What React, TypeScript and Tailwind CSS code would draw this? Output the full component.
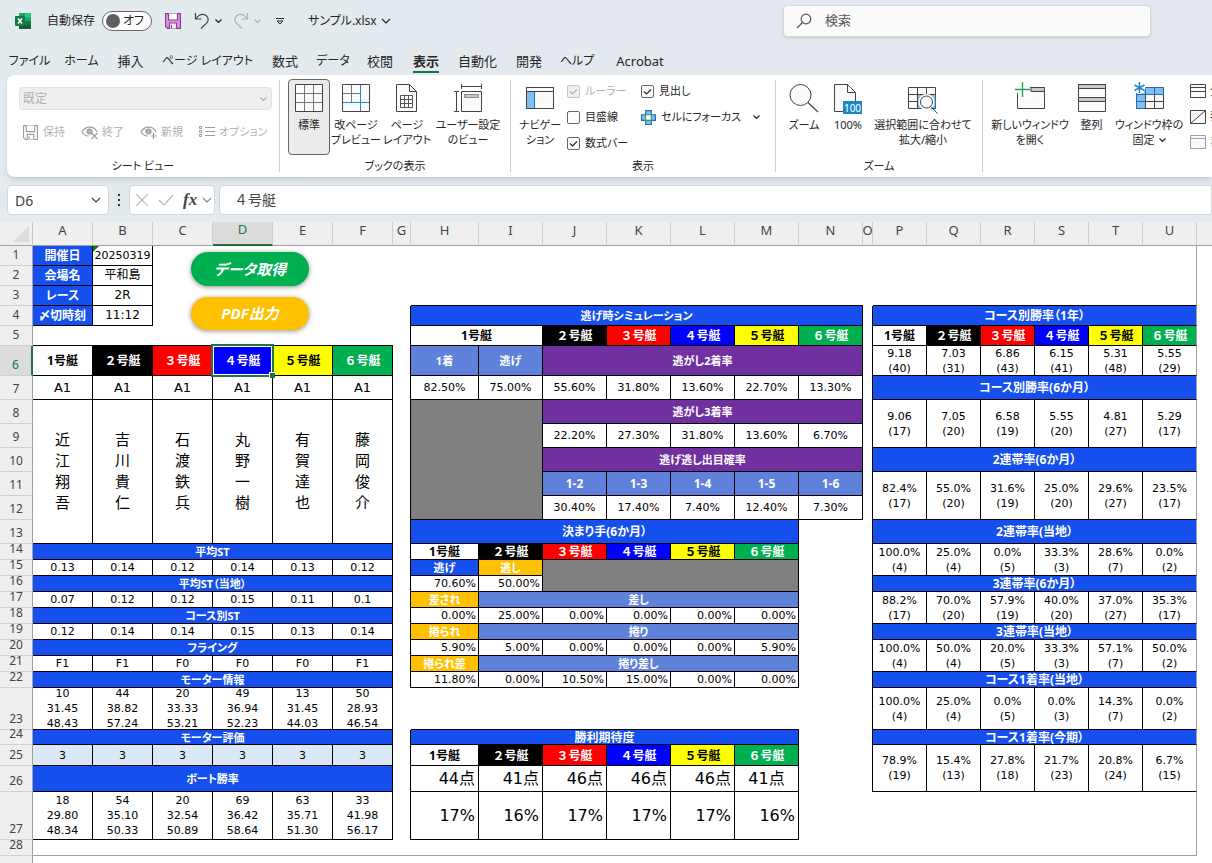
import React from 'react';
import clsx from 'clsx';

/* ---------- icons ---------- */

const Chevron: React.FC<{ className?: string }> = ({ className }) => (
  <svg viewBox="0 0 10 6" fill="none" stroke="currentColor" strokeWidth="1.2" className={clsx('shrink-0', className)}>
    <path d="M1 1l4 4 4-4" />
  </svg>
);

const SmallChevron: React.FC<{ className?: string }> = ({ className }) => (
  <svg viewBox="0 0 7 4" fill="none" stroke="currentColor" strokeWidth="1.2" className={clsx('shrink-0 w-[7px] h-1', className)}>
    <path d="M.5.5l3 3 3-3" />
  </svg>
);

const ExcelLogo = () => (
  <svg viewBox="0 0 16 16" className="w-4 h-4">
    <rect x="4" y="0" width="6" height="4" fill="#21a366" />
    <rect x="10" y="0" width="6" height="4" fill="#33c481" />
    <rect x="4" y="4" width="6" height="4" fill="#107c41" />
    <rect x="10" y="4" width="6" height="4" fill="#21a366" />
    <rect x="4" y="8" width="12" height="8" fill="#185c37" />
    <rect x="10" y="8" width="6" height="4" fill="#107c41" />
    <rect x="0" y="3" width="10" height="10" rx="1" fill="#107c41" />
    <path d="M3 5.500l4 5M7 5.500l-4 5" stroke="#fff" strokeWidth="1.500" />
  </svg>
);

const SaveIcon: React.FC<{ stroke: string; fill: string; className: string }> = ({ stroke, fill, className }) => (
  <svg viewBox="0 0 16 16" className={className} stroke={stroke} strokeWidth="1.200">
    <path d="M.6.6h14.800v14.800H2.600l-2-2z" fill={fill} />
    <path d="M3.500.6v6.400h9V.6M4.500 15.400v-5.400h7v5.400M6.500 12v3" fill="#fff" />
  </svg>
);

const UndoIcon: React.FC<{ className?: string }> = ({ className }) => (
  <svg viewBox="0 0 16 18" fill="none" stroke="currentColor" strokeWidth="1.200" className={className}>
    <path d="M1.500 1v6h6M1.800 6.800C5 2.500 9 1.500 12 3.500c3 2.300 2.600 5.500.5 7.600L7 16.500" />
  </svg>
);

const SearchIcon = () => (
  <svg viewBox="0 0 16 16" fill="none" stroke="#555" strokeWidth="1.200" className="w-4 h-4">
    <circle cx="10" cy="6" r="4.800" />
    <path d="M6.500 9.500L1 15" />
  </svg>
);

const EyeIcon: React.FC<{ mark: string }> = ({ mark }) => (
  <svg viewBox="0 0 18 16" fill="none" stroke="#9c9c9c" strokeWidth="1.200" className="w-[18px] h-4">
    <path d="M1 8c2-3.500 4.500-4.800 7.500-4.800S14.500 4.500 16 8M1 8c1.500 2.500 3.500 3.800 6.500 4" />
    <circle cx="8.500" cy="7.500" r="2.500" fill="#b5b5b5" />
    <path d={mark} />
  </svg>
);

const ListIcon = () => (
  <svg viewBox="0 0 16 14" fill="none" stroke="#9c9c9c" className="w-4 h-[14px]">
    <path d="M.5 1.500h2v2h-2zM.5 5.500h2v2h-2zM.5 9.500h2v2h-2zM6 2.500h10M6 6.500h10M6 10.500h10" />
  </svg>
);

const GridIcon = () => (
  <svg viewBox="0 0 28 28" fill="#fafafa" stroke="#444" className="w-7 h-7">
    <path d="M.5.5h27v27H.5z" />
    <path d="M9.500 1v26M18.500 1v26M1 9.500h26M1 18.500h26" stroke="#777" />
  </svg>
);

const PageBreakIcon = () => (
  <svg viewBox="0 0 28 28" fill="#fafafa" stroke="#444" className="w-7 h-7">
    <path d="M.5.5h27v27H.5z" />
    <path d="M9.500 1v17M1 9.500h17" stroke="#777" />
    <path d="M18.500 1v26M1 18.500h26" stroke="#1e8bcd" />
  </svg>
);

const PageLayoutIcon = () => (
  <svg viewBox="0 0 28 28" fill="#fafafa" stroke="#444" className="w-7 h-7">
    <path d="M3.500.5h13l7 7v20h-20z" />
    <path d="M16.500.5v7h7z" fill="#fff" />
    <path d="M7.500 11.500h12v12h-12zM7.500 15.500h12M7.500 19.500h12M11.500 11.500v12M15.500 11.500v12" stroke="#555" />
  </svg>
);

const CustomViewIcon = () => (
  <svg viewBox="0 0 28 28" fill="#fafafa" stroke="#444" className="w-7 h-7">
    <path d="M7.500 7.500h20v20h-20z" />
    <path d="M10.500 10.500h14v3h-14z" fill="#c8c8c8" stroke="#888" />
    <path d="M7.500 0v5M27.500 0v5M7.500 2.500h20M0 7.500h5M0 27.500h5M2.500 7.500v20" />
  </svg>
);

const NavigationIcon = () => (
  <svg viewBox="0 0 28 28" stroke="#444" className="w-7 h-7">
    <path d="M.5 3.500h27v21H.5z" fill="#fafafa" />
    <path d="M.5 7.500h8v17h-8z" fill="#83beec" stroke="#1e6fb8" />
    <path d="M.5 7.500h27M.5 3.500h27v21H.5z" fill="none" />
  </svg>
);

const FocusCellIcon = () => (
  <svg viewBox="0 0 16 16" className="w-[15px] h-[15px] shrink-0">
    <path d="M5 .6h6V5h4.400v6H11v4.400H5V11H.6V5H5z" fill="#83beec" stroke="#1e6fb8" strokeWidth="1.200" />
    <path d="M5 5h6v6H5z" fill="#fff" stroke="#2e9e58" strokeWidth="1.200" />
  </svg>
);

const ZoomIcon = () => (
  <svg viewBox="0 0 30 30" fill="#fafafa" stroke="#444" className="w-[30px] h-[30px]">
    <circle cx="11.500" cy="12" r="10.500" />
    <path d="M19 19.500l10 9.500" strokeWidth="1.200" />
  </svg>
);

const HundredIcon = () => (
  <svg viewBox="0 0 28 28" stroke="#444" className="w-7 h-7 overflow-visible">
    <path d="M.5.5h13l8 8v19H.5z" fill="#fafafa" />
    <path d="M13.500.5v8h8" fill="none" />
    <path d="M9 17h19v13H9z" fill="#1e86c8" stroke="none" />
    <text x="18.500" y="27.500" textAnchor="middle" fontSize="10" fill="#fff" stroke="none">100</text>
  </svg>
);

const ZoomSelectionIcon = () => (
  <svg viewBox="0 0 30 28" stroke="#444" className="w-[30px] h-7 overflow-visible">
    <path d="M.5 3.500h27v21H.5z" fill="#fafafa" />
    <path d="M9.500 10.500h18v14h-18z" fill="#83beec" stroke="#1e6fb8" />
    <path d="M.5 10.500h27M.5 17.500h9M9.500 3.500v21M18.500 3.500v7" fill="none" />
    <circle cx="18.500" cy="18" r="8" fill="#fff" stroke="none" />
    <circle cx="18.500" cy="18" r="6" fill="#fafafa" />
    <path d="M23 22.500l6.500 7" />
  </svg>
);

const NewWindowIcon = () => (
  <svg viewBox="0 0 30 28" stroke="#444" className="w-[30px] h-7 overflow-visible">
    <path d="M2.500 3.500h27v21h-27z" fill="#fafafa" />
    <path d="M16 3.500h13.500v4H16z" fill="#c8c8c8" />
    <path d="M0 0h15v14H3.500V9H0z" fill="#fff" stroke="none" />
    <path d="M7.500-2v15M0 5.500h15" stroke="#2e9e58" strokeWidth="1.400" />
  </svg>
);

const ArrangeIcon = () => (
  <svg viewBox="0 0 28 28" fill="#fafafa" stroke="#444" className="w-7 h-7">
    <path d="M.5.5h27v27H.5z" />
    <path d="M.5.5h27v4H.5zM.5 13.500h27v4H.5z" fill="#c8c8c8" />
  </svg>
);

const FreezeIcon = () => (
  <svg viewBox="0 0 30 28" stroke="#444" className="w-[30px] h-7 overflow-visible">
    <path d="M2.500 3.500h27v21h-27z" fill="#fafafa" />
    <path d="M2.500 3.500h27v7h-18v14h-9z" fill="#83beec" stroke="#1e6fb8" />
    <path d="M11.500 3.500v7M20.500 3.500v7M2.500 17.500h9M2.500 10.500h9" fill="none" stroke="#1e6fb8" />
    <path d="M20.500 10.500v14M11.500 17.500h18M11.500 10.500v14" fill="none" />
    <circle cx="5.500" cy="4" r="6" fill="#fff" stroke="none" />
    <path d="M5.500-2v11M.5 1l10 5.500M.5 6.500L10.500 1" stroke="#1e86c8" strokeWidth="1.500" />
  </svg>
);

const PaneIcon: React.FC<{ line: string; dim?: boolean }> = ({ line, dim }) => (
  <svg viewBox="0 0 16 14" fill="#fafafa" stroke={dim ? '#a0a0a0' : '#444'} className="w-4 h-[14px] shrink-0">
    <path d="M.5.5h15v13H.5z" />
    <path d={line} />
  </svg>
);

/* ---------- title bar, tabs, ribbon ---------- */

const TitleBar = () => (
  <header className="flex items-center h-[42px] pl-[15px] pr-[61px] justify-between text-[12px] text-[#262626]">
    <div className="flex items-center">
      <ExcelLogo />
      <span id="autosave" className="ml-4">自動保存</span>
      <button
        role="switch"
        aria-checked="false"
        aria-labelledby="autosave"
        className="flex items-center justify-between w-[50px] h-5 ml-[7px] pl-[3px] pr-[7px] rounded-full border border-[#666] bg-white"
      >
        <span className="w-[14px] h-[14px] rounded-full bg-[#606060]" />
        オフ
      </button>
      <button aria-label="上書き保存" className="ml-[13px]">
        <SaveIcon stroke="#8b3a98" fill="#d99ae3" className="w-4 h-4" />
      </button>
      <button aria-label="元に戻す" className="flex items-center gap-[5px] ml-[13px]">
        <UndoIcon className="w-4 h-[18px] text-[#444]" />
        <SmallChevron />
      </button>
      <button aria-label="やり直し" className="flex items-center gap-[5px] ml-[11px] text-[#b0b0b0]">
        <UndoIcon className="w-4 h-[18px] -scale-x-100" />
        <SmallChevron />
      </button>
      <button aria-label="ツールバーのカスタマイズ" className="ml-[15px]">
        <svg viewBox="0 0 8 8" fill="none" stroke="currentColor" className="w-2 h-2">
          <path d="M0 1.500h8M1 4l3 3 3-3z" />
        </svg>
      </button>
      <button className="flex items-center gap-1 ml-6">
        サンプル.xlsx
        <Chevron className="w-[10px] h-[6px]" />
      </button>
    </div>
    <label className="flex items-center gap-[13px] w-[368px] h-8 px-3 rounded bg-[#fafafa] border border-[#d5d9dc] shadow-sm">
      <SearchIcon />
      <input aria-label="検索" placeholder="検索" className="flex-1 outline-none text-[13px] placeholder:text-[#555]" />
    </label>
  </header>
);

const tabs = [
  { name: 'ファイル', style: 'w-[55px] text-[12px]' },
  { name: 'ホーム', style: 'w-[49px] text-[12px]' },
  { name: '挿入', style: 'w-[49px] text-[13px]' },
  { name: 'ページ レイアウト', style: 'w-[105px] text-[12px]' },
  { name: '数式', style: 'w-[50px] text-[13px]' },
  { name: 'データ', style: 'w-[46px] text-[12px]' },
  { name: '校閲', style: 'w-[48px] text-[13px]' },
  { name: '表示', style: 'w-[44px] text-[13px]' },
  { name: '自動化', style: 'w-[59px] text-[13px]' },
  { name: '開発', style: 'w-[44px] text-[13px]' },
  { name: 'ヘルプ', style: 'w-[52px] text-[12px]' },
  { name: 'Acrobat', style: 'w-[74px] text-[13px]' }
];

const Tabs = () => (
  <nav className="flex h-[33px] pl-[2px] pt-[9px] text-[#262626]">
    {tabs.map(tab => (
      <button key={tab.name} className={clsx('flex justify-center whitespace-nowrap', tab.style)}>
        <span
          className={clsx(
            'h-[22px] leading-5',
            tab.name === '表示' && 'font-bold border-b-2 border-[#107c41]'
          )}
        >
          {tab.name}
        </span>
      </button>
    ))}
  </nav>
);

type GroupProps = { label?: string; width?: string; inset?: string; children: React.ReactNode };

const Group: React.FC<GroupProps> = ({ label, width, inset, children }) => (
  <section className={clsx('flex flex-col shrink-0', width)}>
    <div className={clsx('flex h-20', inset)}>{children}</div>
    <div className="h-[22px] leading-[22px] text-center">{label}</div>
  </section>
);

const Separator = () => <div className="w-px my-[5px] shrink-0 bg-[#cfcfcf]" />;

type BigButtonProps = { icon: React.ReactNode; lines: string[]; width: string; active?: boolean; menu?: boolean };

const BigButton: React.FC<BigButtonProps> = ({ icon, lines, width, active, menu }) => (
  <button
    className={clsx(
      'flex flex-col items-center shrink-0 h-[76px] mt-1 pt-1 rounded border leading-[15px] whitespace-nowrap',
      width,
      active ? 'border-[#666] bg-[#ebebeb]' : 'border-transparent'
    )}
  >
    <span className="flex items-center justify-center h-7 mb-[5px]">{icon}</span>
    {lines.map((line, i) => (
      <span key={line} className="flex items-center gap-1">
        {line}
        {menu && i === lines.length - 1 && <SmallChevron />}
      </span>
    ))}
  </button>
);

const Check: React.FC<{ label: string; checked?: boolean; disabled?: boolean }> = ({ label, checked, disabled }) => (
  <label className={clsx('flex items-center gap-[5px] h-[26px] whitespace-nowrap', disabled && 'text-[#b0b0b0]')}>
    <span className="relative flex">
      <input
        type="checkbox"
        defaultChecked={checked}
        disabled={disabled}
        className="peer appearance-none w-[13px] h-[13px] rounded-xs border border-[#666] bg-white disabled:border-[#c4c4c4] disabled:bg-[#f0f0f0]"
      />
      <svg viewBox="0 0 13 13" fill="none" stroke="currentColor" strokeWidth="1.200" className="absolute inset-0 hidden peer-checked:block pointer-events-none">
        <path d="M3 6.500l2.500 2.500L10 4.500" />
      </svg>
    </span>
    {label}
  </label>
);

const Ribbon = () => (
  <div className="flex ml-[7px] rounded-l-lg bg-white shadow-md overflow-hidden text-[11px] text-[#262626]">
    <Group label="シート ビュー" width="w-[272px]">
      <div className="flex flex-col w-full pl-3 pr-[7px] pt-3 gap-[10px] text-[#b0b0b0]">
        <div className="relative flex items-center">
          <select disabled aria-label="シート ビュー" className="appearance-none w-full h-[23px] px-[3px] rounded border border-[#e0e0e0] bg-[#efefef] text-[12px] opacity-100">
            <option>既定</option>
          </select>
          <SmallChevron className="absolute right-[5px]" />
        </div>
        <div className="flex items-center h-6 pl-1 gap-4 whitespace-nowrap">
          <button disabled className="flex items-center gap-[5px]">
            <SaveIcon stroke="#9c9c9c" fill="#fff" className="w-[15px] h-[15px]" />保持
          </button>
          <button disabled className="flex items-center gap-[3px]">
            <EyeIcon mark="M10.500 9l6 6M16.500 9l-6 6" />終了
          </button>
          <button disabled className="flex items-center gap-[3px]">
            <EyeIcon mark="M13.500 9v6M10.500 12h6" />新規
          </button>
          <button disabled className="flex items-center gap-1">
            <ListIcon />オプション
          </button>
        </div>
      </div>
    </Group>
    <Separator />
    <Group label="ブックの表示" width="w-[230px]" inset="pl-2">
      <BigButton icon={<GridIcon />} lines={['標準']} width="w-[42px]" active />
      <BigButton icon={<PageBreakIcon />} lines={['改ページ', 'プレビュー']} width="w-[52px]" />
      <BigButton icon={<PageLayoutIcon />} lines={['ページ', 'レイアウト']} width="w-[50px]" />
      <BigButton icon={<CustomViewIcon />} lines={['ユーザー設定', 'のビュー']} width="w-[72px]" />
    </Group>
    <Separator />
    <Group label="表示" width="w-[264px]" inset="pl-[5px]">
      <BigButton icon={<NavigationIcon />} lines={['ナビゲー', 'ション']} width="w-12" />
      <div className="w-[74px] ml-[3px] pt-[3px]">
        <Check label="ルーラー" checked disabled />
        <Check label="目盛線" />
        <Check label="数式バー" checked />
      </div>
      <div className="pt-[3px]">
        <Check label="見出し" checked />
        <button className="flex items-center h-[26px] whitespace-nowrap">
          <FocusCellIcon />
          <span className="ml-[5px] mr-3">セルにフォーカス</span>
          <SmallChevron />
        </button>
      </div>
    </Group>
    <Separator />
    <Group label="ズーム" width="w-[206px]" inset="pl-2">
      <BigButton icon={<ZoomIcon />} lines={['ズーム']} width="w-10" />
      <BigButton icon={<HundredIcon />} lines={['100%']} width="w-12" />
      <BigButton icon={<ZoomSelectionIcon />} lines={['選択範囲に合わせて', '拡大/縮小']} width="w-[102px]" />
    </Group>
    <Separator />
    <Group inset="pl-[2px]">
      <BigButton icon={<NewWindowIcon />} lines={['新しいウィンドウ', 'を開く']} width="w-[90px]" />
      <BigButton icon={<ArrangeIcon />} lines={['整列']} width="w-[33px]" />
      <BigButton icon={<FreezeIcon />} lines={['ウィンドウ枠の', '固定']} width="w-[82px]" menu />
      <div className="flex flex-col pt-[3px] whitespace-nowrap">
        <button className="flex items-center gap-1 h-[26px]"><PaneIcon line="M.5 3.500h15M.5 7.500h15" />分割</button>
        <button className="flex items-center gap-1 h-[26px]"><PaneIcon line="M.5 13.500l15-13" />表示しない</button>
        <button disabled className="flex items-center gap-1 h-[26px] text-[#b0b0b0]"><PaneIcon line="M.5 3.500h15" dim />再表示</button>
      </div>
    </Group>
  </div>
);

const FormulaBar = () => (
  <div className="flex items-center h-[30px] mt-2 mb-[7px] pl-[7px] text-[14px] text-[#444]">
    <div className="flex items-center w-[102px] h-full px-[7px] rounded border border-[#d3d7da] bg-white">
      <input aria-label="名前ボックス" defaultValue="D6" className="w-full min-w-0 outline-none" />
      <Chevron className="w-[10px] h-[6px]" />
    </div>
    <svg viewBox="0 0 2 12" fill="#333" className="w-[2px] h-3 mx-[9px]">
      <path d="M0 0h2v2H0zM0 5h2v2H0zM0 10h2v2H0z" />
    </svg>
    <div className="flex items-center w-[86px] h-full pl-[6px] pr-[2px] rounded border border-[#d3d7da] bg-white">
      <button aria-label="キャンセル">
        <svg viewBox="0 0 12 12" stroke="#b5b5b5" strokeWidth="1.200" className="w-3 h-3"><path d="M0 0l12 12M12 0L0 12" /></svg>
      </button>
      <button aria-label="入力" className="ml-[10px]">
        <svg viewBox="0 0 16 12" fill="none" stroke="#b5b5b5" strokeWidth="1.200" className="w-4 h-3"><path d="M1 6l5 5L15 1" /></svg>
      </button>
      <button className="ml-[9px] font-['Liberation_Serif',serif] font-bold italic text-[17px] leading-5">fx</button>
      <Chevron className="w-[10px] h-[6px] ml-auto text-[#888]" />
    </div>
    <input
      aria-label="数式バー"
      defaultValue="４号艇"
      className="flex-1 min-w-0 h-full ml-1 px-[14px] pb-[2px] rounded-l border border-[#d3d7da] bg-white outline-none [font-feature-settings:normal]"
    />
  </div>
);

/* ---------- sheet ---------- */

const columns = [
  ...'ABCDEF'.split('').map(name => ({ name, width: 'w-[60px]' })),
  { name: 'G', width: 'w-[18px]' },
  { name: 'H', width: 'w-[68px]' },
  ...'IJKLMN'.split('').map(name => ({ name, width: 'w-[64px]' })),
  { name: 'O', width: 'w-[10px]' },
  ...'PQRSTU'.split('').map(name => ({ name, width: 'w-[54px]' }))
];

const rowHeights = [
  'h-[20px]', 'h-[20px]', 'h-[20px]', 'h-[20px]', 'h-[20px]', 'h-[30px]', 'h-[24px]',
  'h-[24px]', 'h-[24px]', 'h-[24px]', 'h-[24px]', 'h-[24px]', 'h-[24px]', 'h-[16px]',
  'h-[16px]', 'h-[16px]', 'h-[16px]', 'h-[16px]', 'h-[16px]', 'h-[16px]', 'h-[16px]',
  'h-[16px]', 'h-[42px]', 'h-[15px]', 'h-[21px]', 'h-[26px]', 'h-[48px]', 'h-[16px]'
];

type Cell = { text: string; style: string; colSpan: number; rowSpan: number };

const cells: Record<string, Cell> = {};
const covered = new Set<string>();
const colIndex = (name: string) => name.charCodeAt(0) - 65;

// put('H4:N4', ...) merges the range and stores it under its first cell
function put(range: string, text: string, style: string) {
  const [from, to = from] = range.split(':');
  const c1 = colIndex(from[0]);
  const c2 = colIndex(to[0]);
  const r1 = Number(from.slice(1));
  const r2 = Number(to.slice(1));
  for (let r = r1; r <= r2; r++) {
    for (let c = c1; c <= c2; c++) {
      covered.add(columns[c].name + r);
    }
  }
  covered.delete(from);
  cells[from] = { text, style, colSpan: c2 - c1 + 1, rowSpan: r2 - r1 + 1 };
}

// one value per column, from row top down to row bottom
function putRow(cols: string, top: number, bottom: number, values: string[], style: string) {
  values.forEach((value, i) => put(`${cols[i]}${top}:${cols[i]}${bottom}`, value, clsx(style, cols[i] === 'U' && edge)));
}

const edge = 'border-r-[#a0a0a0]';
const box = 'border-r border-b border-black';
const right = 'border-r border-black';
const under = 'border-b border-black';
const bold = "font-bold font-['Noto_Sans','Noto_Sans_CJK_JP',sans-serif]";
const title = clsx(box, bold, 'text-[12px] bg-[#1550ee] text-white');
const blue = clsx(box, bold, 'bg-[#1550ee] text-white');
const steel = clsx(box, bold, 'bg-[#5f81d9] text-white');
const purple = clsx(box, bold, 'bg-[#7030a0] text-white');
const orange = clsx(box, bold, 'bg-[#ffc000] text-white');
const boatCell = clsx(box, bold, 'text-[12px] [font-feature-settings:normal]');
const gray = clsx(box, 'bg-[#808080]');
const toRight = clsx(box, 'text-right pr-[2px]');
const large = clsx(box, 'text-right text-[16px] pr-[3px]');

const boats = [
  { name: '1号艇', color: 'bg-white text-black' },
  { name: '２号艇', color: 'bg-black text-white' },
  { name: '３号艇', color: 'bg-[#ff0000] text-white' },
  { name: '４号艇', color: 'bg-[#0000ff] text-white' },
  { name: '５号艇', color: 'bg-[#ffff00] text-black' },
  { name: '６号艇', color: 'bg-[#00b050] text-white' }
];

function putBoats(cols: string, row: number) {
  boats.forEach((boat, i) =>
    put(`${cols[i]}${row}`, boat.name, clsx(boatCell, boat.color, cols[i] === 'U' && edge))
  );
}

// race info
['開催日', '会場名', 'レース', '〆切時刻'].forEach((t, i) => put(`A${i + 1}`, t, title));
['20250319', '平和島', '2R', '11:12'].forEach((t, i) => put(`B${i + 1}`, t, clsx(box, i > 0 && 'text-[12px]')));
put('C1:F4', '', '');
put('A5:F5', '', under);

// racers
putBoats('ABCDEF', 6);
putRow('ABCDEF', 7, 7, ['A1', 'A1', 'A1', 'A1', 'A1', 'A1'], clsx(box, 'text-[13px]'));
putRow('ABCDEF', 8, 13, ['近江翔吾', '吉川貴仁', '石渡鉄兵', '丸野一樹', '有賀達也', '藤岡俊介'].map(n => n.split('').join('\n')),
  clsx(box, 'text-[15px] leading-[21px]'));
put('A14:F14', '平均ST', blue);
putRow('ABCDEF', 15, 15, ['0.13', '0.14', '0.12', '0.14', '0.13', '0.12'], box);
put('A16:F16', '平均ST（当地）', blue);
putRow('ABCDEF', 17, 17, ['0.07', '0.12', '0.12', '0.15', '0.11', '0.1'], box);
put('A18:F18', 'コース別ST', blue);
putRow('ABCDEF', 19, 19, ['0.12', '0.14', '0.14', '0.15', '0.13', '0.14'], box);
put('A20:F20', 'フライング', blue);
putRow('ABCDEF', 21, 21, ['F1', 'F1', 'F0', 'F0', 'F0', 'F1'], box);
put('A22:F22', 'モーター情報', blue);
putRow('ABCDEF', 23, 23, ['10\n31.45\n48.43', '44\n38.82\n57.24', '20\n33.33\n53.21', '49\n36.94\n52.23', '13\n31.45\n44.03', '50\n28.93\n46.54'], box);
put('A24:F24', 'モーター評価', blue);
putRow('ABCDEF', 25, 25, ['3', '3', '3', '3', '3', '3'], clsx(box, 'bg-[#dae9f8]'));
put('A26:F26', 'ボート勝率', blue);
putRow('ABCDEF', 27, 27, ['18\n29.80\n48.34', '54\n35.10\n50.33', '20\n32.54\n50.89', '69\n36.42\n58.64', '63\n35.71\n51.30', '33\n41.98\n56.17'], box);

// empty areas between the blocks
put('G1:G3', '', '');
put('G4:G22', '', right);
put('G23', '', '');
put('G24:G27', '', right);
put('H1:N2', '', '');
put('H3:N3', '', under);
put('N13:N27', '', '');
put('H23:M23', '', under);
put('O1:O3', '', '');
put('O4:O26', '', right);
put('O27', '', '');
put('P1:U2', '', clsx('border-r', edge));
put('P3:U3', '', clsx(box, edge));
put('P27:U27', '', clsx('border-r', edge));
put('A28:U28', '', 'border-r border-b border-[#a0a0a0]');

// escape simulation
put('H4:N4', '逃げ時シミュレーション', blue);
put('H5:I5', boats[0].name, clsx(boatCell, boats[0].color));
boats.slice(1).forEach((boat, i) => put(`${'JKLMN'[i]}5`, boat.name, clsx(boatCell, boat.color)));
put('H6', '1着', steel);
put('I6', '逃げ', steel);
put('J6:N6', '逃がし2着率', purple);
putRow('HIJKLMN', 7, 7, ['82.50%', '75.00%', '55.60%', '31.80%', '13.60%', '22.70%', '13.30%'], box);
put('H8:I12', '', gray);
put('J8:N8', '逃がし3着率', purple);
putRow('JKLMN', 9, 9, ['22.20%', '27.30%', '31.80%', '13.60%', '6.70%'], box);
put('J10:N10', '逃げ逃し出目確率', purple);
putRow('JKLMN', 11, 11, ['1-2', '1-3', '1-4', '1-5', '1-6'], clsx(steel, 'text-[12px]'));
putRow('JKLMN', 12, 12, ['30.40%', '17.40%', '7.40%', '12.40%', '7.30%'], box);

// winning moves
put('H13:M13', '決まり手(6か月）', title);
putBoats('HIJKLM', 14);
put('H15', '逃げ', blue);
put('I15', '逃し', orange);
put('J15:M16', '', gray);
putRow('HI', 16, 16, ['70.60%', '50.00%'], toRight);
put('H17', '差され', orange);
put('I17:M17', '差し', steel);
putRow('HIJKLM', 18, 18, ['0.00%', '25.00%', '0.00%', '0.00%', '0.00%', '0.00%'], toRight);
put('H19', '捲られ', orange);
put('I19:M19', '捲り', steel);
putRow('HIJKLM', 20, 20, ['5.90%', '5.00%', '0.00%', '0.00%', '0.00%', '5.90%'], toRight);
put('H21', '捲られ差', orange);
put('I21:M21', '捲り差し', steel);
putRow('HIJKLM', 22, 22, ['11.80%', '0.00%', '10.50%', '15.00%', '0.00%', '0.00%'], toRight);

// expected wins
put('H24:M24', '勝利期待度', title);
putBoats('HIJKLM', 25);
putRow('HIJKL', 26, 26, ['44点', '41点', '46点', '46点', '46点'], large);
put('M26', '41点', clsx(box, 'text-[16px]'));
putRow('HIJKLM', 27, 27, ['17%', '16%', '17%', '17%', '17%', '16%'], large);

// rates by course
const rates = [
  { title: 'コース別勝率（1年）', at: 4, rows: [6, 6], values: ['9.18\n(40)', '7.03\n(31)', '6.86\n(43)', '6.15\n(41)', '5.31\n(48)', '5.55\n(29)'] },
  { title: 'コース別勝率(6か月）', at: 7, rows: [8, 9], values: ['9.06\n(17)', '7.05\n(20)', '6.58\n(19)', '5.55\n(20)', '4.81\n(27)', '5.29\n(17)'] },
  { title: '2連帯率(6か月）', at: 10, rows: [11, 12], values: ['82.4%\n(17)', '55.0%\n(20)', '31.6%\n(19)', '25.0%\n(20)', '29.6%\n(27)', '23.5%\n(17)'] },
  { title: '2連帯率(当地）', at: 13, rows: [14, 15], values: ['100.0%\n(4)', '25.0%\n(4)', '0.0%\n(5)', '33.3%\n(3)', '28.6%\n(7)', '0.0%\n(2)'] },
  { title: '3連帯率(6か月）', at: 16, rows: [17, 18], values: ['88.2%\n(17)', '70.0%\n(20)', '57.9%\n(19)', '40.0%\n(20)', '37.0%\n(27)', '35.3%\n(17)'] },
  { title: '3連帯率(当地）', at: 19, rows: [20, 21], values: ['100.0%\n(4)', '50.0%\n(4)', '20.0%\n(5)', '33.3%\n(3)', '57.1%\n(7)', '50.0%\n(2)'] },
  { title: 'コース1着率(当地）', at: 22, rows: [23, 23], values: ['100.0%\n(4)', '25.0%\n(4)', '0.0%\n(5)', '0.0%\n(3)', '14.3%\n(7)', '0.0%\n(2)'] },
  { title: 'コース1着率(今期）', at: 24, rows: [25, 26], values: ['78.9%\n(19)', '15.4%\n(13)', '27.8%\n(18)', '21.7%\n(23)', '20.8%\n(24)', '6.7%\n(15)'] }
];
rates.forEach(rate => {
  put(`P${rate.at}:U${rate.at}`, rate.title, clsx(title, edge));
  putRow('PQRSTU', rate.rows[0], rate.rows[1], rate.values, box);
});
putBoats('PQRSTU', 5);

const shape = 'w-[118px] rounded-full font-bold italic text-white shadow-[0_1px_5px_rgba(0,0,0,0.45)]';

const SheetButtons = () => (
  <div className="absolute top-[6px] left-[38px] z-10 flex flex-col gap-[11px] text-[15px] font-['Noto_Sans','Noto_Sans_CJK_JP',sans-serif]">
    <button className={clsx(shape, 'h-[34px] bg-[#00b050]')}>データ取得</button>
    <button className={clsx(shape, 'h-[33px] bg-[#ffc000]')}>PDF出力</button>
  </div>
);

const Selection = () => (
  <div className="absolute -inset-[2px] z-10 border-2 border-[#217346] ring-1 ring-inset ring-white">
    <div className="absolute -right-[3px] -bottom-[3px] w-[6px] h-[6px] border-t border-l border-white bg-[#217346]" />
  </div>
);

const Sheet = () => (
  <table className="w-full min-w-[1197px] table-fixed border-separate border-spacing-0 bg-white text-[11px] leading-[15px] text-black text-center font-['DejaVu_Sans','Noto_Sans_CJK_JP',sans-serif]">
    <colgroup>
      <col className="w-[33px]" />
      {columns.map(col => <col key={col.name} className={col.width} />)}
      <col />
    </colgroup>
    <thead className="font-['Noto_Sans','Noto_Sans_CJK_JP',sans-serif] text-[13px] text-[#444]">
      <tr className="h-6">
        <td className="p-0 border-r border-b border-[#c8c8c8] border-b-[#a0a0a0] bg-[#efefef]">
          <svg viewBox="0 0 16 16" fill="#dcdcdc" className="w-4 h-4 ml-auto mr-[3px]"><path d="M16 0v16H0z" /></svg>
        </td>
        {columns.map(col => (
          <th
            key={col.name}
            scope="col"
            className={clsx(
              'p-0 pb-2 font-normal leading-[14px] border-r border-[#cfcfcf]',
              col.name === 'D'
                ? 'border-b-2 border-b-[#217346] bg-[#dcdcdc] text-[#217346]'
                : 'border-b border-b-[#a0a0a0] bg-[#efefef]'
            )}
          >
            <div className="-mx-1">{col.name}</div>
          </th>
        ))}
        <td className="p-0 border-b border-[#a0a0a0] bg-[#efefef]" />
      </tr>
    </thead>
    <tbody>
      {rowHeights.map((height, i) => {
        const row = i + 1;
        return (
          <tr key={row} className={height}>
            <th
              scope="row"
              className={clsx(
                "p-0 align-bottom border-b border-b-[#d0d0d0] font-normal text-[12px] font-['Noto_Sans',sans-serif]",
                row === 6 ? 'border-r-2 border-r-[#217346] bg-[#dcdcdc] text-[#217346]' : 'border-r border-r-[#a0a0a0] bg-[#efefef] text-[#444]'
              )}
            >
              <div className="-mt-2 leading-5">{row}</div>
            </th>
            {columns.map(({ name }) => {
              const id = name + row;
              if (covered.has(id)) return null;
              const cell = cells[id];
              return (
                <td
                  key={id}
                  colSpan={cell.colSpan}
                  rowSpan={cell.rowSpan}
                  className={clsx('relative p-0 whitespace-pre', cell.style)}
                >
                  {cell.text && <div className="-my-1">{cell.text}</div>}
                  {id === 'B1' && <div className="absolute top-0 left-0 border-t-[6px] border-r-[6px] border-t-[#107c10] border-r-transparent" />}
                  {id === 'C1' && <SheetButtons />}
                  {id === 'D6' && <Selection />}
                </td>
              );
            })}
            <td className="p-0" />
          </tr>
        );
      })}
      <tr className="h-[7px]">
        <th className="p-0 border-r border-[#a0a0a0] bg-[#efefef]" />
        <td colSpan={22} className="p-0" />
      </tr>
    </tbody>
  </table>
);

export default function App() {
  return (
    <div className="min-h-screen overflow-hidden bg-linear-to-r from-[#e3ebee] to-[#e4e8f0] font-['Noto_Sans','Noto_Sans_CJK_JP',sans-serif] [font-feature-settings:'palt']">
      <TitleBar />
      <Tabs />
      <Ribbon />
      <FormulaBar />
      <Sheet />
    </div>
  );
}
